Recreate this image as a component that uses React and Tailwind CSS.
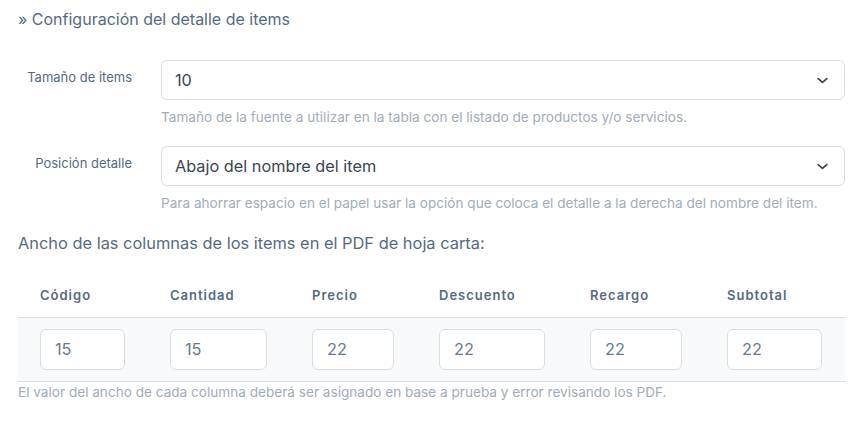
import React from 'react';

const cols = [
  { name: 'Código', value: '15', cell: 'w-[130px]', input: 'w-[85px]' },
  { name: 'Cantidad', value: '15', cell: 'w-[142px]', input: 'w-[97px]' },
  { name: 'Precio', value: '22', cell: 'w-[127px]', input: 'w-[82px]' },
  { name: 'Descuento', value: '22', cell: 'w-[151px]', input: 'w-[106px]' },
  { name: 'Recargo', value: '22', cell: 'w-[137px]', input: 'w-[92px]' },
  { name: 'Subtotal', value: '22', cell: 'w-[140px]', input: 'w-[95px]' },
];

function Chevron() {
  return (
    <svg width="15" height="15" viewBox="0 0 24 24" fill="none" stroke="#384551" strokeWidth="2.6" strokeLinecap="round" strokeLinejoin="round">
      <path d="M5 9l7 6 7-6" />
    </svg>
  );
}

function SelectRow({ label, value, help }) {
  return (
    <div className="flex">
      <div className="w-[143px] pr-[29px] pt-[8px] text-right text-[13px] text-[#566a7f]">{label}</div>
      <div className="flex-1">
        <div className="flex h-[40px] items-center justify-between rounded-md border border-[#d9dee3] bg-white pl-[13px] pr-[14px] text-[16.3px] text-[#384551]">
          <span>{value}</span>
          <Chevron />
        </div>
        <div className="mt-[7px] text-[13.6px] leading-[20px] text-[#a1acb8]">{help}</div>
      </div>
    </div>
  );
}

export default function App() {
  return (
    <div className="min-h-[422px] bg-white pl-[18px] pr-[21px] pt-[7px] font-['Inter',sans-serif] antialiased">
      <h5 className="text-[16px] leading-[24px] text-[#566a7f]">» Configuración del detalle de items</h5>

      <div className="mt-[29px] flex flex-col gap-[19px]">
        <SelectRow
          label="Tamaño de items"
          value="10"
          help="Tamaño de la fuente a utilizar en la tabla con el listado de productos y/o servicios."
        />
        <SelectRow
          label="Posición detalle"
          value="Abajo del nombre del item"
          help="Para ahorrar espacio en el papel usar la opción que coloca el detalle a la derecha del nombre del item."
        />
      </div>

      <p className="mt-[18px] text-[16.4px] leading-[24px] text-[#566a7f]">Ancho de las columnas de los items en el PDF de hoja carta:</p>

      <table className="mt-[11px] w-[827px] border-collapse">
        <thead>
          <tr className="border-b border-[#d9dee3]">
            {cols.map((c) => (
              <th key={c.name} className={`${c.cell} h-[51px] px-[22px] pb-[11px] align-bottom text-left text-[13px] font-semibold tracking-[1px] text-[#566a7f]`}>
                {c.name}
              </th>
            ))}
          </tr>
        </thead>
        <tbody>
          <tr className="border-b border-[#d9dee3] bg-[#f8f9fa]">
            {cols.map((c) => (
              <td key={c.name} className="h-[64px] px-[22px]">
                <div className={`${c.input} flex h-[41px] items-center rounded-md border border-[#d9dee3] bg-white px-[14px] text-[16.3px] text-[#697a8d]`}>
                  {c.value}
                </div>
              </td>
            ))}
          </tr>
        </tbody>
      </table>

      <p className="mt-0 text-[13.6px] leading-[20px] text-[#a1acb8]">
        El valor del ancho de cada columna deberá ser asignado en base a prueba y error revisando los PDF.
      </p>
    </div>
  );
}
